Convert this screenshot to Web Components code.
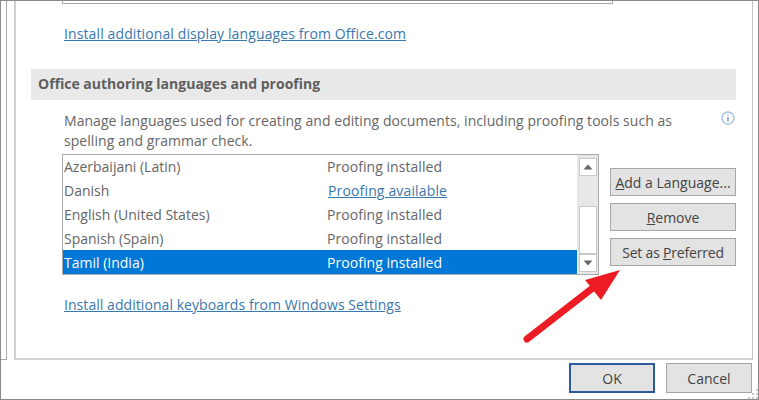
<!DOCTYPE html>
<html lang="en">
<head>
<meta charset="utf-8">
<title>Language options</title>
<style>
    html, body { margin: 0; height: 400px; overflow: hidden; background: white; }
    body { font-family: "Open Sans", "Noto Sans", sans-serif; }
</style>
</head>
<body>
<options-dialog>
    <section-heading>Office authoring languages and proofing</section-heading>
</options-dialog>

<script>
class OfficeLink extends HTMLElement {
    constructor() {
        super();
        this.attachShadow({ mode: "open" });
        this.shadowRoot.innerHTML = `
            <style>
                :host { display: block; color: #3a78b0; text-decoration: underline; font-size: 14px; line-height: 20px; white-space: nowrap; }
            </style>
            <slot></slot>
        `;
    }
}

class SectionHeading extends HTMLElement {
    constructor() {
        super();
        this.attachShadow({ mode: "open" });
        this.shadowRoot.innerHTML = `
            <style>
                :host {
                    display: block;
                    height: 31px;
                    padding-left: 7px;
                    background: #e9e9e9;
                    color: #5f5f5f;
                    font-size: 14px;
                    font-weight: 700;
                    line-height: 30px;
                }
            </style>
            <slot></slot>
        `;
    }
}

class DialogButton extends HTMLElement {
    constructor() {
        super();
        this.attachShadow({ mode: "open" });
        this.shadowRoot.innerHTML = `
            <style>
                :host {
                    display: flex;
                    align-items: center;
                    justify-content: center;
                    box-sizing: border-box;
                    height: 28px;
                    background: #e3e3e3;
                    border: 1px solid #a6a6a6;
                    color: #444;
                    font-size: 14px;
                    white-space: nowrap;
                }
                :host([primary]) { border: 2px solid #2b5a9e; }
            </style>
            <slot></slot>
        `;
    }
}

class LanguageRow extends HTMLElement {
    static get observedAttributes() {
        return ["name", "status"];
    }

    constructor() {
        super();
        this.attachShadow({ mode: "open" });
        this.shadowRoot.innerHTML = `
            <style>
                :host {
                    display: grid;
                    grid-template-columns: 263px 1fr;
                    height: 24px;
                    padding-left: 1px;
                    color: #666;
                    font-size: 14px;
                    line-height: 26px;
                    white-space: nowrap;
                }
                :host([selected]) { background: #0078d7; color: #fff; }
                :host([available]) .status { color: #3a78b0; text-decoration: underline; padding-left: 1px; letter-spacing: 0.15px; }
                .status { letter-spacing: 0.05px; }
            </style>
            <span class="name"></span>
            <span class="status"></span>
        `;
    }

    attributeChangedCallback(name, oldValue, newValue) {
        this.shadowRoot.querySelector("." + name).textContent = newValue;
    }
}

class ListScrollbar extends HTMLElement {
    constructor() {
        super();
        this.attachShadow({ mode: "open" });
        this.shadowRoot.innerHTML = `
            <style>
                :host {
                    display: flex;
                    flex-direction: column;
                    box-sizing: border-box;
                    width: 21px;
                    padding: 3px 1px 2px 2px;
                    background: #e8e8e8;
                }
                .arrow, .thumb { background: #fff; border: 1px solid #c8c8c8; box-sizing: border-box; }
                .arrow { height: 18px; display: flex; align-items: center; justify-content: center; }
                .track { height: 30px; }
                .thumb { flex: 1; }
                svg { display: block; }
            </style>
            <div class="arrow"><svg width="10" height="6" viewBox="0 0 10 6"><path d="M5 0.5 9.5 5.5H0.5Z" fill="#666"/></svg></div>
            <div class="track"></div>
            <div class="thumb"></div>
            <div class="arrow"><svg width="10" height="6" viewBox="0 0 10 6"><path d="M0.5 0.5H9.5L5 5.5Z" fill="#666"/></svg></div>
        `;
    }
}

class LanguageList extends HTMLElement {
    constructor() {
        super();
        this.attachShadow({ mode: "open" });
        this.shadowRoot.innerHTML = `
            <style>
                :host {
                    display: flex;
                    flex: none;
                    box-sizing: border-box;
                    width: 537px;
                    height: 121px;
                    border: 1px solid #a8a8a8;
                }
                .rows { flex: 1; display: flex; flex-direction: column; margin-top: -1px; }
            </style>
            <div class="rows">
                <language-row name="Azerbaijani (Latin)" status="Proofing installed"></language-row>
                <language-row name="Danish" status="Proofing available" available></language-row>
                <language-row name="English (United States)" status="Proofing installed"></language-row>
                <language-row name="Spanish (Spain)" status="Proofing installed"></language-row>
                <language-row name="Tamil (India)" status="Proofing installed" selected></language-row>
            </div>
            <list-scrollbar></list-scrollbar>
        `;
    }
}

class OptionsDialog extends HTMLElement {
    constructor() {
        super();
        this.attachShadow({ mode: "open" });
        this.shadowRoot.innerHTML = `
            <style>
                :host {
                    display: block;
                    position: relative;
                    box-sizing: border-box;
                    width: 759px;
                    height: 400px;
                    border: 1px solid #8a8a8a;
                    overflow: hidden;
                }
                .frame { display: flex; height: 359px; }
                .rail { width: 5px; flex: none; border-right: 1px solid #a8a8a8; border-bottom: 1px solid #a8a8a8; }
                .panel {
                    box-sizing: border-box;
                    flex: none;
                    width: 739px;
                    margin-left: 7px;
                    padding: 0 16px 0 15px;
                    border-left: 2px solid #cfcfcf;
                    border-right: 1px solid #c4c4c4;
                    border-bottom: 2px solid #d4d4d4;
                }
                .top-box {
                    box-sizing: border-box;
                    height: 3px;
                    margin: 0 123px 0 31px;
                    border: 1px solid #a8a8a8;
                    border-top: 0;
                }
                .indent { margin-left: 33px; }
                .install { margin-top: 20px; letter-spacing: 0.115px; }
                ::slotted(section-heading) { margin-top: 25px; width: 698px; }
                .intro-row { display: flex; margin-top: 11px; height: 43px; }
                .intro { width: 640px; color: #666; font-size: 14px; line-height: 20px; margin: 0; letter-spacing: 0.05px; }
                .info { margin: -1px 0 0 19px; display: block; }
                .list-row { display: flex; margin-left: -2px; }
                .actions { display: flex; flex-direction: column; gap: 7px; flex: none; width: 126px; margin: 14px 0 0 11px; }
                .preferred { letter-spacing: -0.2px; }
                .keyboards { margin-top: 20px; letter-spacing: 0.06px; }
                .footer { display: flex; justify-content: flex-end; gap: 11px; padding: 3px 6px 0 0; }
                .footer dialog-button { width: 86px; height: 30px; }
                .arrow { position: absolute; left: 0; top: 0; pointer-events: none; }
                .grip { position: absolute; right: 0; bottom: 0; }
            </style>
            <div class="frame">
                <div class="rail"></div>
                <div class="panel">
                    <div class="top-box"></div>
                    <office-link class="indent install">Install additional display languages from Office.com</office-link>
                    <slot></slot>
                    <div class="indent">
                        <div class="intro-row">
                            <p class="intro">Manage languages used for creating and editing documents, including proofing tools such as spelling and grammar check.</p>
                            <svg class="info" width="16" height="16" viewBox="0 0 16 16" fill="none">
                                <circle cx="8" cy="8" r="6" stroke="#a9c4e6" stroke-width="1.5"/>
                                <path d="M8 7v4.5" stroke="#7d9cc4" stroke-width="1.5"/>
                                <path d="M8 4.5v1.2" stroke="#a9c4e6" stroke-width="1.5"/>
                            </svg>
                        </div>
                        <div class="list-row">
                            <language-list></language-list>
                            <div class="actions">
                                <dialog-button><span><u>A</u>dd a Language...</span></dialog-button>
                                <dialog-button><span><u>R</u>emove</span></dialog-button>
                                <dialog-button><span class="preferred">Set as <u>P</u>referred</span></dialog-button>
                            </div>
                        </div>
                        <office-link class="keyboards">Install additional keyboards from Windows Settings</office-link>
                    </div>
                </div>
            </div>
            <div class="footer">
                <dialog-button primary>OK</dialog-button>
                <dialog-button>Cancel</dialog-button>
            </div>
            <svg class="grip" width="10" height="10" viewBox="0 0 10 10" fill="#c8c8c8">
                <rect x="8" y="0" width="2" height="2"/>
                <rect x="4" y="4" width="2" height="2"/><rect x="8" y="4" width="2" height="2"/>
                <rect x="0" y="8" width="2" height="2"/><rect x="4" y="8" width="2" height="2"/><rect x="8" y="8" width="2" height="2"/>
            </svg>
            <svg class="arrow" width="757" height="398" viewBox="1 1 757 398">
                <path d="M527 339 594 287" stroke="#ed1c24" stroke-width="7" stroke-linecap="round" fill="none"/>
                <path d="M620 270 585 280 601 300Z" fill="#ed1c24"/>
            </svg>
        `;
    }
}

customElements.define("office-link", OfficeLink);
customElements.define("section-heading", SectionHeading);
customElements.define("dialog-button", DialogButton);
customElements.define("language-row", LanguageRow);
customElements.define("list-scrollbar", ListScrollbar);
customElements.define("language-list", LanguageList);
customElements.define("options-dialog", OptionsDialog);
</script>
</body>
</html>
